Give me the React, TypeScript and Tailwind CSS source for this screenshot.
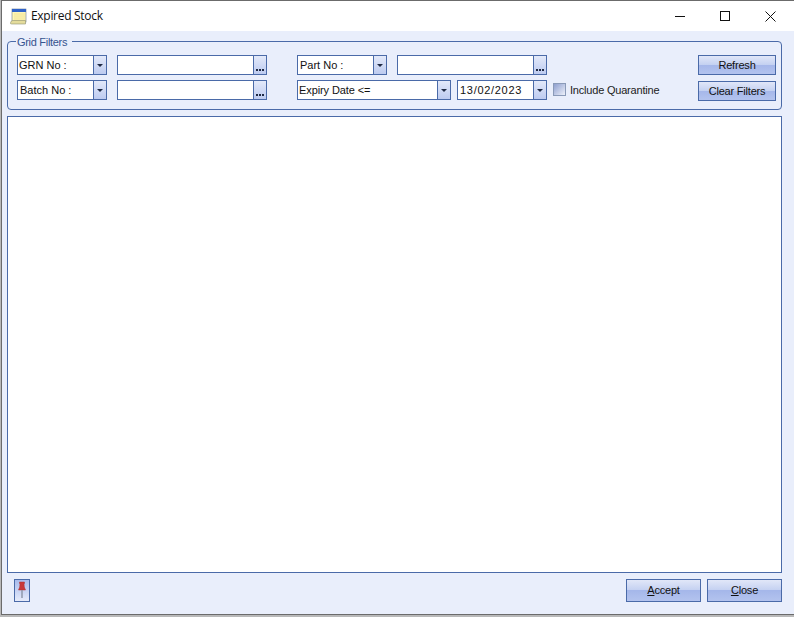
const UI_FONT = "font-['Liberation_Sans',Arial,sans-serif]";

function Arrow() {
  return <span className="w-0 h-0 border-x-[3px] border-x-transparent border-t-[3px] border-t-[#1f2a44]" />;
}

function Combo({ label, width, pad = "pl-[1px]", tracking = "" }: { label: string; width: string; pad?: string; tracking?: string }) {
  return (
    <div className={`flex h-5 border border-[#4a6aa8] bg-white ${width}`}>
      <div className={`flex-1 min-w-0 flex items-center text-[11px] text-[#111] whitespace-nowrap ${pad} ${tracking}`}>{label}</div>
      <div className="w-[13px] flex items-center justify-center border-l border-[#4a6aa8] bg-gradient-to-b from-[#e3e9f9] to-[#bdcbf0]">
        <Arrow />
      </div>
    </div>
  );
}

function Lookup({ width }: { width: string }) {
  return (
    <div className={`flex h-5 border border-[#4a6aa8] bg-white ${width}`}>
      <div className="flex-1" />
      <div className="w-[13px] flex items-end justify-center gap-px pb-[3px] border-l border-[#4a6aa8] bg-gradient-to-b from-[#e3e9f9] to-[#bdcbf0]">
        <span className="w-[2px] h-[2px] bg-[#1f2a44]" />
        <span className="w-[2px] h-[2px] bg-[#1f2a44]" />
        <span className="w-[2px] h-[2px] bg-[#1f2a44]" />
      </div>
    </div>
  );
}

function Button({ children, width, height }: { children: React.ReactNode; width: string; height: string }) {
  return (
    <button className={`block border border-[#4a6aa8] text-[11px] tracking-[-0.2px] text-[#111] bg-[linear-gradient(to_bottom,#e1e7f8_0%,#c3d0f1_50%,#a5b7ea_50%,#b3c3ee_100%)] ${width} ${height}`}>
      {children}
    </button>
  );
}

function NotepadIcon() {
  return (
    <svg width="17" height="17" viewBox="0 0 17 17">
      <rect x="2" y="1" width="14" height="13" fill="#fdf6b8" stroke="#6b7a8a" strokeWidth="0.6" />
      <rect x="2" y="1" width="14" height="3" fill="#2f62c8" />
      <path d="M4 6h11M4 8h11M4 10h11M4 12h11" stroke="#efe08c" strokeWidth="0.8" />
      <path d="M0.500 15.500c0-2 1-3 2.500-3h12.500v3.500H2c-1 0-1.500-0.200-1.500-0.500z" fill="#e4dc9c" stroke="#8f9170" strokeWidth="0.6" />
    </svg>
  );
}

function PinIcon() {
  return (
    <svg width="10" height="19" viewBox="0 0 10 19">
      <path d="M2.500 1h5v1.500H7L7.300 6 8.500 9h-7l1.200-3L3 2.500h-.5z" fill="#c8383a" stroke="#b03032" strokeWidth="0.5" />
      <rect x="4.300" y="9" width="1.400" height="8" fill="#8a93a6" />
    </svg>
  );
}

export default function App() {
  return (
    <div className={`w-[794px] h-[617px] overflow-hidden flex flex-col bg-[#b9b9b9] ${UI_FONT}`}>
      <div className="h-[615px] ml-px border-l border-t border-b border-[#6b6b6b] bg-[#e9eefb] flex flex-col">
        {/* title bar */}
        <div className="h-[30px] shrink-0 bg-white flex items-center pl-2 pr-[18px]">
          <NotepadIcon />
          <span className="ml-1 text-xs tracking-[-0.3px] text-[#111] font-['Open_Sans',sans-serif]">Expired Stock</span>
          <div className="ml-auto flex items-center gap-[35px]">
            <span className="w-[10px] h-px bg-[#111]" />
            <span className="w-[10px] h-[10px] border border-[#111]" />
            <svg width="11" height="11" viewBox="0 0 11 11">
              <path d="M0.500 0.500l10 10M10.500 0.500l-10 10" stroke="#111" strokeWidth="1" fill="none" />
            </svg>
          </div>
        </div>

        <div className="flex-1 min-h-0 flex flex-col pl-[5px] pr-[12px] pt-[3px] pb-[12px]">
          {/* filters */}
          <fieldset className="h-[76px] shrink-0 border border-[#4a6aa8] rounded-[4px] pl-[9px] pr-[5px]">
            <legend className="-ml-px pl-px pr-[5px] text-[11px] tracking-[-0.3px] leading-[14px] text-[#36538f]">
              <span className="inline-block translate-y-px">Grid Filters</span>
            </legend>
            <div className="flex mt-[7px]">
              <div className="flex flex-col gap-[5px]">
                <div className="flex">
                  <Combo label="GRN No :" width="w-[90px]" />
                  <div className="w-[10px]" />
                  <Lookup width="w-[150px]" />
                </div>
                <div className="flex">
                  <Combo label="Batch No :" width="w-[90px]" pad="pl-[2px]" />
                  <div className="w-[10px]" />
                  <Lookup width="w-[150px]" />
                </div>
              </div>
              <div className="ml-[30px] flex flex-col gap-[5px]">
                <div className="flex">
                  <Combo label="Part No :" width="w-[90px]" pad="pl-[2px]" />
                  <div className="w-[10px]" />
                  <Lookup width="w-[150px]" />
                </div>
                <div className="flex">
                  <Combo label="Expiry Date <=" width="w-[154px]" pad="pl-[1px]" tracking="tracking-[-0.1px]" />
                  <div className="w-[6px]" />
                  <Combo label="13/02/2023" width="w-[90px]" pad="pl-[2px]" tracking="tracking-[0.7px]" />
                  <span className="ml-[6px] mt-[3px] w-[13px] h-[13px] border border-[#8a9ab8] bg-gradient-to-br from-[#8f9fce] to-[#eef1fa]" />
                  <span className="ml-[4px] text-[11px] tracking-[-0.2px] text-[#222] whitespace-nowrap leading-5">Include Quarantine</span>
                </div>
              </div>
              <div className="ml-auto flex flex-col gap-[6px]">
                <Button width="w-[78px]" height="h-5">Refresh</Button>
                <Button width="w-[78px]" height="h-5">Clear Filters</Button>
              </div>
            </div>
          </fieldset>

          {/* grid */}
          <div className="mt-[6px] flex-1 min-h-0 border border-[#4a6aa8] bg-white" />

          {/* footer */}
          <div className="mt-[6px] h-[23px] shrink-0 flex items-stretch pl-[7px]">
            <div className="w-4 flex items-center justify-center border border-[#4a6aa8] bg-gradient-to-b from-[#a9bbec] to-[#e6ebfa]">
              <PinIcon />
            </div>
            <div className="ml-auto flex gap-[6px]">
              <Button width="w-[75px]" height="h-full"><span className="underline">A</span>ccept</Button>
              <Button width="w-[75px]" height="h-full"><span className="underline">C</span>lose</Button>
            </div>
          </div>
        </div>
      </div>
    </div>
  );
}
